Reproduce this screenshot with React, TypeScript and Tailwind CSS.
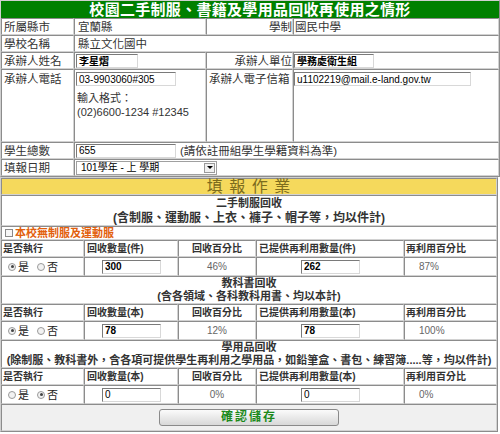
import React from 'react';

const FONT = "font-['Liberation_Sans','Noto_Sans_CJK_TC',sans-serif]";
const CELL = 'border border-t-[#8c8c8c] border-l-[#8c8c8c] border-b-[#d2d2d2] border-r-[#d2d2d2] p-0';
const INPUT =
  'block h-[14px] border border-t-[#7a7a7a] border-l-[#7a7a7a] border-b-[#d8d8d8] border-r-[#d8d8d8] bg-white px-[2px] text-[10px] leading-[12px] text-black outline-none';

type Row = {
  title: string;
  note: string;
  noteSize: string;
  unit: string;
  yes: boolean;
  got: string;
  gotPct: string;
  reuse: string;
  reusePct: string;
  disabled?: boolean;
  checkbox?: boolean;
};

const sections: Row[] = [
  {
    title: '二手制服回收',
    note: '(含制服、運動服、上衣、褲子、帽子等，均以件計)',
    noteSize: 'text-[12px]',
    unit: '件',
    yes: true,
    got: '300',
    gotPct: '46%',
    reuse: '262',
    reusePct: '87%',
    checkbox: true,
  },
  {
    title: '教科書回收',
    note: '(含各領域、各科教科用書、均以本計)',
    noteSize: 'text-[11px]',
    unit: '本',
    yes: true,
    got: '78',
    gotPct: '12%',
    reuse: '78',
    reusePct: '100%',
  },
  {
    title: '學用品回收',
    note: '(除制服、教科書外，含各項可提供學生再利用之學用品，如鉛筆盒、書包、練習簿.....等，均以件計)',
    noteSize: 'text-[11px]',
    unit: '本',
    yes: false,
    got: '0',
    gotPct: '0%',
    reuse: '0',
    reusePct: '0%',
    disabled: true,
  },
];

const Radio = ({ on }: { on: boolean }) => (
  <span className="inline-flex h-[8px] w-[8px] items-center justify-center rounded-full border border-[#9a9a9a] bg-[#f2f2f2]">
    {on && <span className="h-[3px] w-[3px] rounded-full bg-[#444]" />}
  </span>
);

const Section = ({ s, first }: { s: Row; first?: boolean }) => (
  <>
    <tr className={first ? 'h-[31px]' : 'h-[28px]'}>
      <td colSpan={5} className={`${CELL} text-center font-bold text-[#333]`}>
        <div className={`text-[11px] ${first ? 'leading-[15px]' : 'leading-[13px]'}`}>{s.title}</div>
        <div className={`${s.noteSize} ${first ? 'leading-[14px]' : 'leading-[13px]'}`}>{s.note}</div>
      </td>
    </tr>
    {s.checkbox && (
      <tr className="h-[14px]">
        <td colSpan={5} className={CELL}>
          <div className="flex items-center gap-[2px] pl-[3px] text-[11px] font-bold leading-[12px] text-[#e2600c]">
            <span className="h-[8px] w-[8px] border border-[#8a8a8a] bg-[#f6f6f6]" />
            本校無制服及運動服
          </div>
        </td>
      </tr>
    )}
    <tr className="h-[17px] text-[10px] font-bold leading-[13px] text-[#333]">
      <td className={`${CELL} pl-[1px]`}>是否執行</td>
      <td className={`${CELL} pl-[2px]`}>回收數量({s.unit})</td>
      <td className={`${CELL} text-center`}>回收百分比</td>
      <td className={`${CELL} pl-[2px]`}>已提供再利用數量({s.unit})</td>
      <td className={`${CELL} pl-[1px]`}>再利用百分比</td>
    </tr>
    <tr className="h-[19px] text-[10px] leading-[12px] text-[#666]">
      <td className={CELL}>
        <div className="flex items-center gap-[2px] pl-[6px] text-[11px] leading-[12px] text-[#222]">
          <Radio on={s.yes} />
          <span>是</span>
          <span className="ml-[4px]" />
          <Radio on={!s.yes} />
          <span>否</span>
        </div>
      </td>
      <td className={CELL}>
        <input
          readOnly
          value={s.got}
          className={`${INPUT} ml-[17px] w-[59px] ${s.disabled ? 'bg-[#ececec] font-normal text-[#888]' : 'font-bold'}`}
        />
      </td>
      <td className={`${CELL} text-center`}>{s.gotPct}</td>
      <td className={CELL}>
        <input
          readOnly
          value={s.reuse}
          className={`${INPUT} ml-[44px] w-[59px] ${s.disabled ? 'bg-[#ececec] font-normal text-[#888]' : 'font-bold'}`}
        />
      </td>
      <td className={`${CELL} pl-[14px]`}>{s.reusePct}</td>
    </tr>
  </>
);

export default function App() {
  return (
    <div className={`${FONT} w-[500px] bg-white text-black`}>
      <table className="w-[498px] table-fixed border-separate border-spacing-0 border border-t-[#d0d0d0] border-l-[#d0d0d0] border-b-[#8c8c8c] border-r-[#8c8c8c]">
        <colgroup>
          <col className="w-[73px]" />
          <col className="w-[132px]" />
          <col className="w-[87px]" />
          <col className="w-[206px]" />
        </colgroup>
        <tbody className="text-[11.5px] leading-[14px] text-[#333]">
          <tr className="h-[17px]">
            <td colSpan={4} className="bg-[#008000] p-0 text-center text-[15px] font-bold leading-[16px] tracking-[0.3px] text-white">
              校園二手制服、書籍及學用品回收再使用之情形
            </td>
          </tr>
          <tr className="h-[17px]">
            <td className={`${CELL} pl-[2px]`}>所屬縣市</td>
            <td className={`${CELL} pl-[3px]`}>宜蘭縣</td>
            <td className={`${CELL} text-right`}>學制</td>
            <td className={`${CELL} pl-[1px]`}>國民中學</td>
          </tr>
          <tr className="h-[17px]">
            <td className={`${CELL} pl-[2px]`}>學校名稱</td>
            <td colSpan={3} className={`${CELL} pl-[3px]`}>
              縣立文化國中
            </td>
          </tr>
          <tr className="h-[17px]">
            <td className={`${CELL} pl-[2px]`}>承辦人姓名</td>
            <td className={`${CELL} pl-[1px]`}>
              <input readOnly value="李星熠" className={`${INPUT} h-[13px] w-[62px] font-bold`} />
            </td>
            <td className={`${CELL} text-right`}>承辦人單位</td>
            <td className={CELL}>
              <input readOnly value="學務處衛生組" className={`${INPUT} h-[13px] w-[80px] font-bold`} />
            </td>
          </tr>
          <tr className="h-[73px] align-top">
            <td className={`${CELL} pl-[2px] pt-[2px]`}>承辦人電話</td>
            <td className={`${CELL} pl-[1px] pt-[2px]`}>
              <input readOnly value="03-9903060#305" className={`${INPUT} w-[100px]`} />
              <div className="mt-[5px] pl-[1px] text-[11px] leading-[14px]">輸入格式：</div>
              <div className="pl-[1px] text-[11px] leading-[14px]">(02)6600-1234 #12345</div>
            </td>
            <td className={`${CELL} pl-[2px] pt-[2px]`}>承辦人電子信箱</td>
            <td className={`${CELL} pt-[2px]`}>
              <input readOnly value="u1102219@mail.e-land.gov.tw" className={`${INPUT} w-[177px]`} />
            </td>
          </tr>
          <tr className="h-[17px]">
            <td className={`${CELL} pl-[2px]`}>學生總數</td>
            <td colSpan={3} className={`${CELL} pl-[1px]`}>
              <div className="flex items-center gap-[4px]">
                <input readOnly value="655" className={`${INPUT} w-[100px]`} />
                <span>(請依註冊組學生學籍資料為準)</span>
              </div>
            </td>
          </tr>
          <tr className="h-[17px]">
            <td className={`${CELL} pl-[2px]`}>填報日期</td>
            <td colSpan={3} className={`${CELL} pl-[1px]`}>
              <div className="flex h-[14px] w-[141px] items-center justify-between border border-[#a0a0a0] bg-white pl-[4px] pr-[1px] text-[10px] leading-[12px] text-black">
                <span>101學年 - 上 學期</span>
                <span className="flex h-[10px] w-[11px] items-center justify-center border border-[#9a9a9a] bg-[#f0f0f0]">
                  <span className="h-0 w-0 border-x-[3px] border-t-[3px] border-x-transparent border-t-black" />
                </span>
              </div>
            </td>
          </tr>
        </tbody>
      </table>

      <table className="w-[498px] table-fixed border-separate border-spacing-0 border border-t-[#d0d0d0] border-l-[#d0d0d0] border-b-[#8c8c8c] border-r-[#8c8c8c]">
        <colgroup>
          <col className="w-[83px]" />
          <col className="w-[94px]" />
          <col className="w-[78px]" />
          <col className="w-[148px]" />
          <col className="w-[93px]" />
        </colgroup>
        <tbody>
          <tr className="h-[17px]">
            <td colSpan={5} className={`${CELL} bg-[#f5d95c] text-center text-[16px] leading-[15px] tracking-[1px] text-[#7d6c1c]`}>
              填 報 作 業
            </td>
          </tr>
          {sections.map((s, i) => (
            <Section key={s.title} s={s} first={i === 0} />
          ))}
          <tr className="h-[27px]">
            <td colSpan={5} className={`${CELL} bg-[#f0f0f0]`}>
              <div className="flex justify-center">
                <button className="h-[17px] w-[180px] rounded-[3px] border border-[#8a8a8a] bg-gradient-to-b from-[#fbfbfb] to-[#d8d8d8] text-[12px] font-bold leading-[15px] tracking-[2px] text-[#1c8a1c]">
                  確認儲存
                </button>
              </div>
            </td>
          </tr>
        </tbody>
      </table>
    </div>
  );
}
